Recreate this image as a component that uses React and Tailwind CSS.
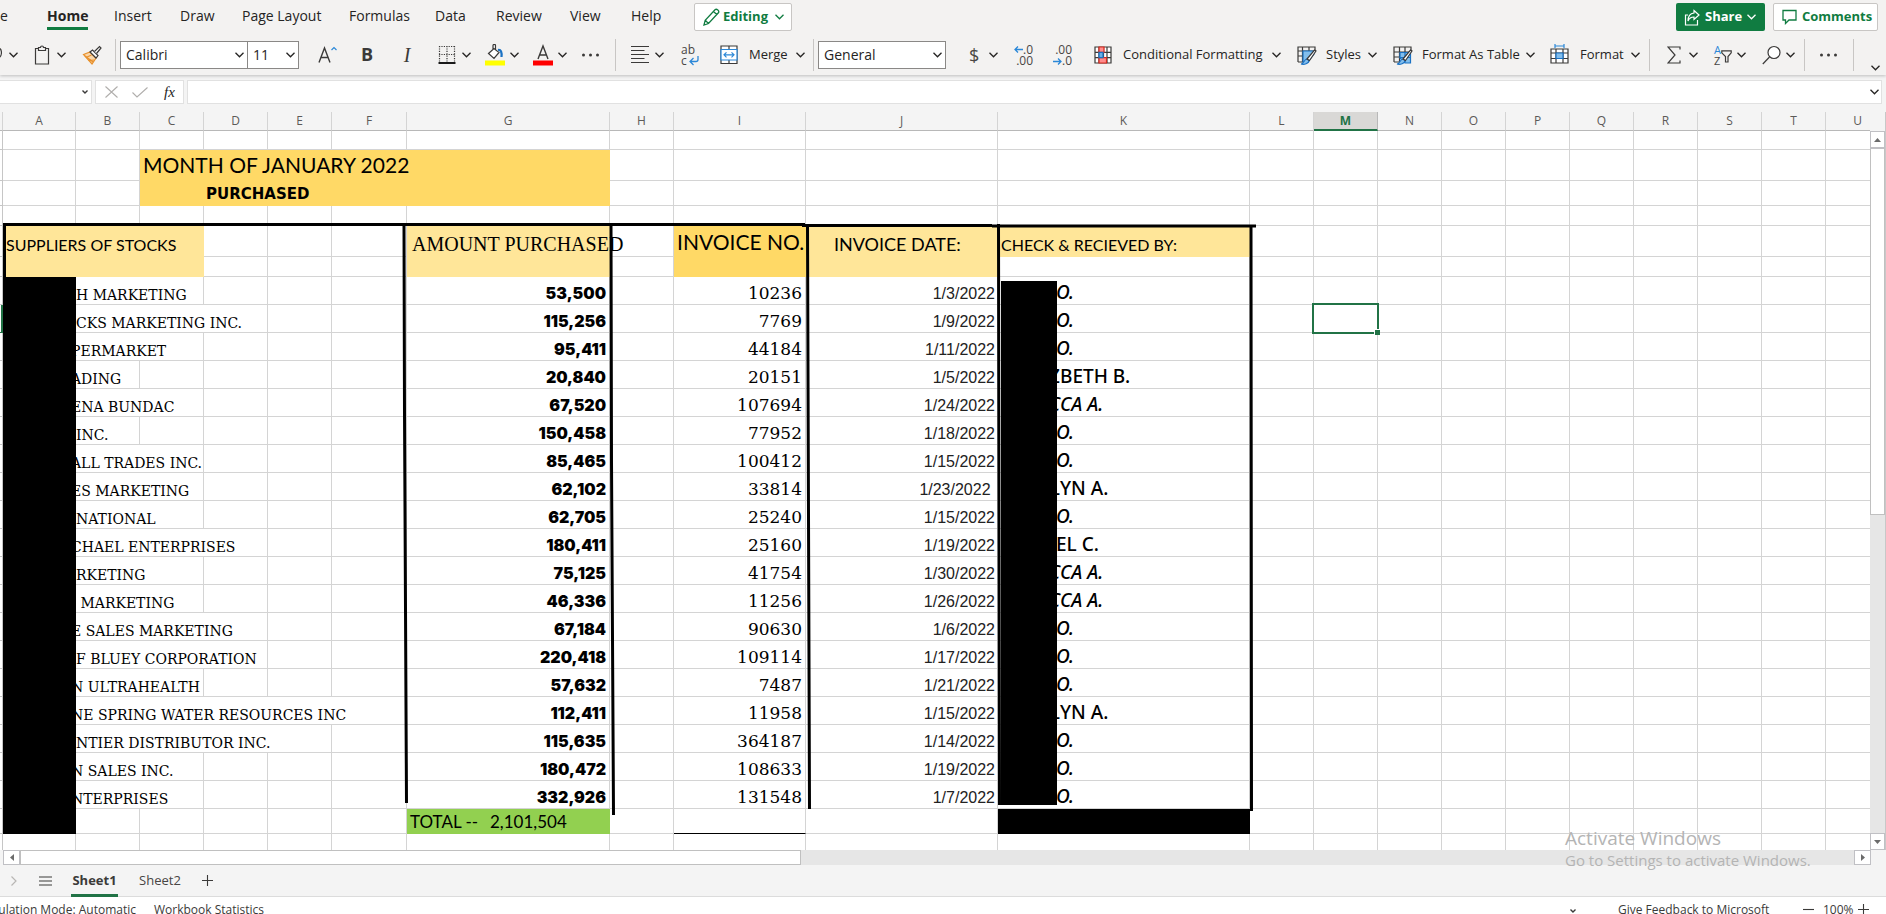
import React from "react";

const UI = "font-['Open_Sans','Noto_Sans',sans-serif]";
const CALIBRI = "font-['Lato','Noto_Sans',sans-serif]";

const menuTabs = [
  { label: "Home", cls: "w-[67px]", active: true },
  { label: "Insert", cls: "w-[66px]" },
  { label: "Draw", cls: "w-[62px]" },
  { label: "Page Layout", cls: "w-[107px]" },
  { label: "Formulas", cls: "w-[86px]" },
  { label: "Data", cls: "w-[61px]" },
  { label: "Review", cls: "w-[74px]" },
  { label: "View", cls: "w-[61px]" },
  { label: "Help", cls: "w-[63px]" },
];

const suppliers = [
  { name: "H MARKETING", span: 2, amount: "53,500", invoice: "10236", date: "1/3/2022", hidden: "", by: "O.", slant: true },
  { name: "CKS MARKETING INC.", span: 3, amount: "115,256", invoice: "7769", date: "1/9/2022", hidden: "", by: "O.", slant: true },
  { name: "PERMARKET", clip: true, span: 2, amount: "95,411", invoice: "44184", date: "1/11/2022", hidden: "", by: "O.", slant: true },
  { name: "ADING", clip: true, span: 1, amount: "20,840", invoice: "20151", date: "1/5/2022", hidden: "Z", by: "BETH B." },
  { name: "ENA BUNDAC", clip: true, span: 2, amount: "67,520", invoice: "107694", date: "1/24/2022", hidden: "C", by: "CA A.", slant: true },
  { name: "INC.", span: 1, amount: "150,458", invoice: "77952", date: "1/18/2022", hidden: "", by: "O.", slant: true },
  { name: "ALL TRADES INC.", clip: true, span: 2, amount: "85,465", invoice: "100412", date: "1/15/2022", hidden: "", by: "O.", slant: true },
  { name: "ES MARKETING", clip: true, span: 2, amount: "62,102", invoice: "33814", date: "1/23/2022 ", hidden: "L", by: "YN A." },
  { name: "NATIONAL", span: 2, amount: "62,705", invoice: "25240", date: "1/15/2022", hidden: "", by: "O.", slant: true },
  { name: "CHAEL ENTERPRISES", clip: true, span: 3, amount: "180,411", invoice: "25160", date: "1/19/2022", hidden: "", by: "EL C." },
  { name: "RKETING", span: 2, amount: "75,125", invoice: "41754", date: "1/30/2022", hidden: "C", by: "CA A.", slant: true },
  { name: " MARKETING", span: 2, amount: "46,336", invoice: "11256", date: "1/26/2022", hidden: "C", by: "CA A.", slant: true },
  { name: "E SALES MARKETING", clip: true, span: 3, amount: "67,184", invoice: "90630", date: "1/6/2022", hidden: "", by: "O.", slant: true },
  { name: "F BLUEY CORPORATION", span: 3, amount: "220,418", invoice: "109114", date: "1/17/2022", hidden: "", by: "O.", slant: true },
  { name: "N ULTRAHEALTH", clip: true, span: 2, amount: "57,632", invoice: "7487", date: "1/21/2022", hidden: "", by: "O.", slant: true },
  { name: "NE SPRING WATER RESOURCES INC", clip: true, span: 5, amount: "112,411", invoice: "11958", date: "1/15/2022", hidden: "L", by: "YN A." },
  { name: "NTIER DISTRIBUTOR INC.", span: 4, amount: "115,635", invoice: "364187", date: "1/14/2022", hidden: "", by: "O.", slant: true },
  { name: "N SALES INC.", clip: true, span: 2, amount: "180,472", invoice: "108633", date: "1/19/2022", hidden: "", by: "O.", slant: true },
  { name: "NTERPRISES", clip: true, span: 2, amount: "332,926", invoice: "131548", date: "1/7/2022", hidden: "", by: "O.", slant: true },
];

const columns = "ABCDEFGHIJKLMNOPQRSTU".split("");
const columnWidths = {
  A: "w-[73px]", F: "w-[75px]", G: "w-[203px]", I: "w-[132px]", J: "w-[192px]", K: "w-[252px]",
};

function Chevron({ className = "" }) {
  return (
    <svg className={"h-[6px] w-[9px] shrink-0 " + className} viewBox="0 0 9 6" fill="none" stroke="currentColor" strokeWidth="1.3" aria-hidden="true">
      <path d="M0.5 0.8 4.5 4.8 8.5 0.8" />
    </svg>
  );
}

function Sep({ className = "" }) {
  return <span className={"h-8 w-px shrink-0 bg-[#c8c6c4] " + className} />;
}

function Tool({ label, className = "", gap = "gap-[6px]", menu = true, children }) {
  return (
    <button type="button" aria-label={label} className={"flex h-8 shrink-0 items-center " + gap + " " + className}>
      {children}
      {menu && <Chevron />}
    </button>
  );
}

function Icon({ w, h = 20, cls, children }) {
  return (
    <svg className={"shrink-0 " + cls} viewBox={`0 0 ${w} ${h}`} fill="none" stroke="#3b3a39" strokeWidth="1.2" aria-hidden="true">
      {children}
    </svg>
  );
}

function Dots() {
  return (
    <Icon w={19} cls="h-5 w-[19px]">
      <g fill="#3b3a39" stroke="none">
        <circle cx="2.5" cy="10" r="1.5" />
        <circle cx="9.5" cy="10" r="1.5" />
        <circle cx="16.5" cy="10" r="1.5" />
      </g>
    </Icon>
  );
}

function TopBar() {
  return (
    <div className="flex h-[34px] items-start">
      <nav className="flex">
        <a href="#file" className="w-[47px] pt-[6px] text-[14px] leading-5">e</a>
        {menuTabs.map((t) => (
          <a key={t.label} href={"#" + t.label} className={"block shrink-0 whitespace-nowrap pt-[6px] text-[14px] leading-5 " + t.cls}>
            <span className={t.active ? "inline-block border-b-[3px] border-[#107c41] pb-px font-bold" : ""}>{t.label}</span>
          </a>
        ))}
      </nav>
      <button type="button" className="mt-[3px] flex h-7 w-[98px] items-center rounded-[2px] border border-[#c8c6c4] bg-white pl-2 text-[13px] font-bold text-[#107c41]">
        <svg className="h-[18px] w-[17px]" viewBox="0 0 17 18" fill="none" stroke="currentColor" strokeWidth="1.3" aria-hidden="true">
          <path d="M1 17 2.200 12.200 12 1.800c1.600-1.500 4.800 1 3.400 3L5.500 15.500Z M10.500 3.500 13.800 6.500 M2.200 12.200 5.500 15.500" />
        </svg>
        <span className="ml-[3px] w-[46px] text-left">Editing</span>
        <Chevron className="ml-[6px]" />
      </button>
      <div className="ml-auto mr-2 mt-[3px] flex gap-2">
        <button type="button" className="flex h-7 w-[89px] items-center rounded-[2px] bg-[#107c41] pl-2 text-[13px] font-bold text-white">
          <svg className="h-[17px] w-4" viewBox="0 0 16 17" fill="none" stroke="currentColor" strokeWidth="1.2" aria-hidden="true">
            <path d="M4 6H1.500V16h12v-5 M10 1.500 15 6l-5 4.500V8C7 8 5 9.500 4 12 4 8 6 4.500 10 4Z" />
          </svg>
          <span className="ml-[5px] w-9 text-left">Share</span>
          <Chevron className="ml-[6px]" />
        </button>
        <button type="button" className="flex h-7 w-[105px] items-center rounded-[2px] border border-[#c8c6c4] bg-white pl-2 text-[13px] font-bold text-[#107c41]">
          <svg className="h-4 w-[15px]" viewBox="0 0 15 16" fill="none" stroke="currentColor" strokeWidth="1.3" aria-hidden="true">
            <path d="M1 1.500h13v9.500H7L3.500 14.500V11H1Z" />
          </svg>
          <span className="ml-[5px]">Comments</span>
        </button>
      </div>
    </div>
  );
}

function Picker({ label, value, className }) {
  return (
    <label className={"relative flex h-7 shrink-0 items-center border border-[#8a8886] bg-white " + className}>
      <span className="sr-only">{label}</span>
      <select className="h-full w-full appearance-none bg-transparent pl-[5px] text-[14px] leading-5 outline-none" defaultValue={value}>
        <option>{value}</option>
      </select>
      <Chevron className="pointer-events-none absolute right-[3px]" />
    </label>
  );
}

function Ribbon() {
  return (
    <div className="flex h-[41px] items-center text-[13px]">
      <Tool label="Undo" gap="gap-[7px]">
        <Icon w={2} cls="h-5 w-[2px]"><path d="M0 3.500c2 2 2 7-0.500 9" /></Icon>
      </Tool>
      <Tool label="Paste" className="ml-4" gap="gap-[7px]">
        <Icon w={16} cls="h-5 w-4">
          <path d="M4.500 3.500H1.500v15.500h13V3.500h-3" />
          <path d="M4.500 5.500v-3h2a1.500 1.500 0 0 1 3 0h2v3Z" />
        </Icon>
      </Tool>
      <Tool label="Format Painter" className="ml-4" menu={false}>
        <Icon w={20} cls="h-5 w-5">
          <path d="M1.500 9.500 8 7l6 6-4 6Z" fill="#fbd7a8" stroke="#e8912d" />
          <path d="M4 12.500 9.500 10 M6.500 15.500 12 15 M3 11l8 6" stroke="#e8912d" />
          <path d="M8 7l2.500-2 5.500 5.500-2 2.500Z" fill="#fff" />
          <path d="M12.500 6.500 17.500 1.500l1.500 1.500-4.500 5.500" fill="#fff" />
        </Icon>
      </Tool>
      <Sep className="ml-[13px]" />
      <Picker label="Font" value="Calibri" className="ml-1 w-32" />
      <Picker label="Font size" value="11" className="-ml-px w-[52px]" />
      <Tool label="Increase font size" className="ml-[19px]" menu={false}>
        <Icon w={19} cls="h-5 w-[19px]">
          <path d="M1 17.500 6.500 3l5.500 14.500 M3 12.500h7" strokeWidth="1.400" />
          <path d="M13.500 5 16 2.500 18.500 5" stroke="#2b88d8" />
        </Icon>
      </Tool>
      <button type="button" className="ml-6 h-8 w-3 shrink-0 text-center text-[18px] font-bold text-[#3b3a39]">B</button>
      <button type="button" className="ml-7 h-8 w-3 shrink-0 text-center font-['Liberation_Serif',serif] text-[20px] italic text-[#3b3a39]">I</button>
      <Tool label="Borders" className="ml-[25px]">
        <Icon w={18} cls="h-5 w-[18px]">
          <path d="M1.500 1v16 M9 1v16 M16.500 1v16 M1 1.500h16 M1 9.500h16" strokeDasharray="1.200 1.200" />
          <path d="M0.500 18h17" stroke="#000" strokeWidth="1.800" />
        </Icon>
      </Tool>
      <Tool label="Fill color" className="ml-[14px]" gap="gap-[5px]">
        <Icon w={20} cls="h-[22px] w-5" h={22}>
          <path d="M3.500 9.500 9 4.500l5 4-5 6Z M8 6V1.500c0-1.500 2.500-1.500 2.500 0V6" fill="#fff" />
          <path d="M13 6c3-0.500 4 2 3.500 7" stroke="#1b72c4" strokeWidth="2.200" />
          <path d="M0 16.500h20v5H0Z" fill="#ffff00" stroke="none" />
        </Icon>
      </Tool>
      <Tool label="Font color" className="ml-[14px]" gap="gap-[5px]">
        <Icon w={20} cls="h-[22px] w-5" h={22}>
          <path d="M5 15 10 2l5 13 M6.800 11h6.400" strokeWidth="1.400" />
          <path d="M0 16.500h20v5H0Z" fill="#ff0000" stroke="none" />
        </Icon>
      </Tool>
      <Tool label="More font options" className="ml-[14px]" menu={false}><Dots /></Tool>
      <Sep className="ml-[15px]" />
      <Tool label="Alignment" className="ml-[15px]">
        <Icon w={18} cls="h-5 w-[18px]">
          <path d="M0 1.500h18 M0 5.500h13.500 M0 9.500h18 M0 13.500h13.500 M0 17.500h18" />
        </Icon>
      </Tool>
      <Tool label="Wrap text" className="ml-[17px]" menu={false}>
        <span className="relative block h-[22px] w-[18px] text-left text-[12px] leading-[11px] text-[#484644]">
          ab<br />c
          <svg className="absolute bottom-0 right-0 h-[10px] w-[10px]" viewBox="0 0 10 10" fill="none" stroke="#2b88d8" strokeWidth="1.3" aria-hidden="true">
            <path d="M9 0v3.500c0 1-0.500 2-2 2H1.500 M4.500 2 1 5.500 4.500 9" />
          </svg>
        </span>
      </Tool>
      <Tool label="Merge" className="ml-[21px]" gap="gap-[7px]">
        <Icon w={18} cls="mr-1 h-5 w-[18px]">
          <path d="M1 1h16v17.500H1Z M9 1v3.500 M9 15v3.500" fill="#fff" />
          <path d="M1 4.500h16v10.500H1Z" stroke="#2b88d8" fill="#fff" />
          <path d="M4 9.800h10 M6.500 7.300 4 9.800l2.500 2.500 M11.500 7.300 14 9.800l-2.500 2.500" stroke="#2b88d8" />
        </Icon>
        <span className="w-10 text-left">Merge</span>
      </Tool>
      <Sep className="ml-2" />
      <Picker label="Number format" value="General" className="ml-1 w-32" />
      <Tool label="Currency" className="ml-[23px]" gap="gap-[10px]">
        <span className="w-[10px] text-[18px] leading-5 text-[#484644]">$</span>
      </Tool>
      <Tool label="Increase decimal" className="ml-4" menu={false}>
        <span className="relative block w-[19px] text-right text-[12px] leading-[11px] text-[#484644]">
          .0<br />.00
          <svg className="absolute left-0 top-[2px] h-[7px] w-[9px]" viewBox="0 0 9 7" fill="none" stroke="#2b88d8" strokeWidth="1.3" aria-hidden="true">
            <path d="M9 3.500H1 M4 0.500 1 3.500l3 3" />
          </svg>
        </span>
      </Tool>
      <Tool label="Decrease decimal" className="ml-5" menu={false}>
        <span className="relative block w-[19px] text-right text-[12px] leading-[11px] text-[#484644]">
          .00<br />.0
          <svg className="absolute bottom-[1px] left-0 h-[7px] w-[9px]" viewBox="0 0 9 7" fill="none" stroke="#2b88d8" strokeWidth="1.3" aria-hidden="true">
            <path d="M0 3.500h8 M5 0.500 8 3.500l-3 3" />
          </svg>
        </span>
      </Tool>
      <Tool label="Conditional Formatting" className="ml-[22px]" gap="gap-[7px]">
        <Icon w={18} cls="mr-1 h-5 w-[18px]">
          <path d="M1 2h16v16H1Z M1 7.300h16 M1 12.600h16 M5 2v16 M9.500 2v16 M13 2v16" fill="#fff" />
          <path d="M5 2h5v5.300H5Z M5 12.600h7.500V18H5Z" fill="#ff8c8c" stroke="#d92b1f" />
          <path d="M5 7.300h4v5.300H5Z" fill="#69afe5" stroke="#1b72c4" />
        </Icon>
        <span className="w-[142px] whitespace-nowrap text-left">Conditional Formatting</span>
      </Tool>
      <Tool label="Styles" className="ml-4">
        <Icon w={20} cls="mr-[3px] h-5 w-5">
          <path d="M1 17V2h17v4 M1 6h17 M5.500 2v15 M1 11h5 M1 17h6 M12 2v4" />
          <path d="M6 6h11v3l-6 8H6Z" fill="#83beec" stroke="#1b72c4" />
          <path d="M4 19c3 0 3-5 6-5l2 1.500c0 3-5 4.500-8 3.500Z" fill="#83beec" stroke="#1b72c4" />
          <path d="M10 14 17.500 5l1.500 1-6.500 9.500Z" fill="#fff" />
        </Icon>
        <span className="w-9 text-left">Styles</span>
      </Tool>
      <Tool label="Format As Table" className="ml-4">
        <Icon w={20} cls="mr-[3px] h-5 w-5">
          <path d="M1 17V2h17v4 M1 7h17 M1 12h8 M1 17h6 M6.500 2v15 M12 2v8" />
          <path d="M7 7.500h10.500v10.500H12L7 13Z" fill="#83beec" stroke="#1b72c4" />
          <path d="M6.500 12.500h11 M12 7.500v10" stroke="#1b72c4" />
          <path d="M4 19c3 0 3-5 6-5l2 1.500c0 3-5 4.500-8 3.500Z" fill="#83beec" stroke="#1b72c4" />
          <path d="M10 14 17.500 5l1.500 1-6.500 9.500Z" fill="#fff" />
        </Icon>
        <span className="w-[98px] whitespace-nowrap text-left">Format As Table</span>
      </Tool>
      <Tool label="Format" className="ml-[15px]">
        <Icon w={19} cls="mr-[5px] h-[22px] w-[19px]">
          <path d="M1 4h17v14H1Z M1 8h17 M1 13.500h17 M6 4v14 M13 4v14" fill="#fff" />
          <path d="M6 8h7v5.500H6Z" fill="#83beec" stroke="#1b72c4" />
          <path d="M5 1h9 M5-1v4 M14-1v4" stroke="#2b88d8" />
        </Icon>
        <span className="w-[45px] text-left">Format</span>
      </Tool>
      <Sep className="ml-[9px]" />
      <Tool label="AutoSum" className="ml-[17px]" gap="gap-2">
        <Icon w={14} cls="h-5 w-[14px]"><path d="M13 4.500V2H1l7 8-7 8h12v-2.500" /></Icon>
      </Tool>
      <Tool label="Sort and filter" className="ml-4" gap="gap-[5px]">
        <span className="relative block h-[22px] w-[18px] text-left text-[11px] leading-[11px] text-[#484644]">
          <span className="text-[#2b88d8]">A</span><br />Z
          <svg className="absolute right-0 top-[6px] h-[13px] w-[11px]" viewBox="0 0 11 13" fill="none" stroke="#3b3a39" strokeWidth="1.2" aria-hidden="true">
            <path d="M0.800 0.800h9.400v2L7 6.500v5.500H4.500V6.500L0.800 2.800Z" />
          </svg>
        </span>
      </Tool>
      <Tool label="Find" className="ml-4" gap="gap-[5px]">
        <Icon w={19} cls="h-5 w-[19px]">
          <circle cx="12" cy="7.500" r="6" fill="#fff" />
          <path d="M7.500 12 0.800 19" />
        </Icon>
      </Tool>
      <Sep className="ml-[9px]" />
      <Tool label="More commands" className="ml-[14px]" menu={false}><Dots /></Tool>
      <Sep className="ml-[15px]" />
      <button type="button" aria-label="Ribbon display options" className="ml-auto mr-[6px] flex h-8 shrink-0 items-end">
        <Chevron />
      </button>
    </div>
  );
}

function FormulaBar() {
  return (
    <div className="flex h-9 items-start gap-[3px] bg-[#f4f4f4] pr-1 pt-1">
      <label className="relative flex h-6 w-[92px] items-center border border-l-0 border-[#e1e1e1] bg-white">
        <span className="sr-only">Name box</span>
        <input className="h-full w-full bg-transparent outline-none" />
        <svg className="absolute right-[3px] h-1 w-[6px]" viewBox="0 0 6 4" fill="none" stroke="#3b3a39" strokeWidth="1.4" aria-hidden="true"><path d="M0.500 0.500 3 3 5.500 0.500" /></svg>
      </label>
      <div className="flex h-6 w-[89px] items-center border border-[#e1e1e1] bg-white pl-[9px]">
        <button type="button" aria-label="Cancel"><svg className="h-3 w-[13px]" viewBox="0 0 13 12" stroke="#b0aeac" strokeWidth="1.1" aria-hidden="true"><path d="M0.500 0.500 12.500 11.500 M12.500 0.500 0.500 11.500" /></svg></button>
        <button type="button" aria-label="Enter" className="ml-[14px]"><svg className="h-[11px] w-4" viewBox="0 0 16 11" fill="none" stroke="#b0aeac" strokeWidth="1.1" aria-hidden="true"><path d="M0.500 5.500 5 10 15.500 0.500" /></svg></button>
        <button type="button" aria-label="Insert function" className="ml-4 font-['Liberation_Serif',serif] text-[15px] italic leading-5 text-[#252423]">fx</button>
      </div>
      <label className="relative flex h-6 flex-1 items-center border border-[#e1e1e1] bg-white">
        <span className="sr-only">Formula bar</span>
        <input className="h-full w-full bg-transparent px-2 outline-none" />
        <Chevron className="absolute right-[2px]" />
      </label>
    </div>
  );
}

const cell = "border-r border-b border-[#d4d4d4] p-0";
const filled = "border-r border-b border-transparent p-0";

function Blank({ from, to }) {
  return columns
    .slice(columns.indexOf(from), columns.indexOf(to) + 1)
    .map((c) => <td key={c} className={cell} />);
}

function RowHead({ selected }) {
  return <td className={selected ? "border-r-2 border-b border-[#217346] p-0" : "border-r border-b border-[#c6c6c6] p-0"} />;
}

function Grid() {
  return (
    <div className="relative min-w-0 flex-1 overflow-hidden bg-white">
      <table className="w-px table-fixed border-separate border-spacing-0 text-black">
        <colgroup>
          <col className="w-[3px]" />
          {columns.map((c) => (
            <col key={c} className={c in columnWidths ? columnWidths[c] : "w-16"} />
          ))}
        </colgroup>
        <thead>
          <tr className="h-[19px]">
            <th className="border-r border-b border-[#d4d4d4] border-b-[#b8b8b8] bg-[#f4f4f4] p-0" />
            {columns.map((c) => (
              <th
                key={c}
                className={
                  c === "M"
                    ? "border-r border-b-2 border-r-[#b8b8b8] border-b-[#217346] bg-[#d9d8d6] p-0 text-[12px] font-bold leading-4 text-[#217346]"
                    : "border-r border-b border-r-[#d4d4d4] border-b-[#b8b8b8] bg-[#f4f4f4] p-0 pb-px text-[12px] font-normal leading-4 text-[#5c5a58]"
                }
              >
                {c}
              </th>
            ))}
          </tr>
        </thead>
        <tbody>
          <tr className="h-[19px]"><RowHead /><Blank from="A" to="U" /></tr>
          <tr className="h-[31px]">
            <RowHead /><Blank from="A" to="B" />
            <td colSpan={5} className={"bg-[#ffd966] text-[21px] leading-7 " + filled + " " + CALIBRI}>
              <span className="pl-[3px]">MONTH OF JANUARY 2022</span>
            </td>
            <Blank from="H" to="U" />
          </tr>
          <tr className="h-[25px]">
            <RowHead /><Blank from="A" to="B" />
            <td colSpan={5} className={"bg-[#ffd966] font-['DejaVu_Sans',sans-serif] text-[15px] font-bold " + filled}>
              <div className="h-6 pl-[66px] pt-[2px] leading-[22px]">PURCHASED</div>
            </td>
            <Blank from="H" to="U" />
          </tr>
          <tr className="h-5"><RowHead /><Blank from="A" to="U" /></tr>
          <tr className={"h-[31px] whitespace-nowrap text-[16px] leading-7 " + CALIBRI}>
            <RowHead />
            <td colSpan={3} rowSpan={2} className={"bg-[#ffe699] align-top " + filled}><div className="pl-[3px] pt-[5px]">SUPPLIERS OF STOCKS</div></td>
            <Blank from="D" to="F" />
            <td rowSpan={2} className={"bg-[#ffe699] align-top font-['Liberation_Serif',serif] text-[20px] " + filled}><div className="relative z-10 pl-[5px] pt-1">AMOUNT PURCHASED</div></td>
            <Blank from="H" to="H" />
            <td rowSpan={2} className={"bg-[#ffd966] align-top text-[21px] " + filled}><div className="pl-[3px] pt-[2px]">INVOICE NO.</div></td>
            <td rowSpan={2} className={"bg-[#ffe699] align-top text-[18px] " + filled}><div className="pl-7 pt-1">INVOICE DATE:</div></td>
            <td className={"bg-[#ffe699] align-top " + filled}><div className="h-[30px] pl-[3px] pt-[5px]">CHECK &amp; RECIEVED BY:</div></td>
            <Blank from="L" to="U" />
          </tr>
          <tr className="h-5">
            <RowHead /><Blank from="D" to="F" /><Blank from="H" to="H" /><Blank from="K" to="U" />
          </tr>
          {suppliers.map((s, i) => (
            <tr key={s.name + i} className="h-7 whitespace-pre">
              <RowHead selected={i === 1} />
              <td className="bg-black p-0" />
              <td colSpan={s.span} className={cell}>
                <div className={"h-[27px] overflow-hidden pt-[9px] font-['DejaVu_Serif',serif] text-[14px] leading-[18px] " + (s.clip ? "-indent-[5px]" : "")}>{s.name}</div>
              </td>
              {s.span < 5 && <Blank from={"BCDEF"[s.span]} to="F" />}
              <td className={cell + " text-right font-['Inter',sans-serif] text-[16px] font-black"}><div className="pr-[3px] pt-[5px] leading-5">{s.amount}</div></td>
              <Blank from="H" to="H" />
              <td className={cell + " text-right font-['DejaVu_Serif',serif] text-[17px]"}><div className="pr-[3px] pt-[5px] leading-5">{s.invoice}</div></td>
              <td className={cell + " text-right font-['Liberation_Sans',sans-serif] text-[16px] text-[#222222]"}><div className="pr-[2px] pt-[7px] leading-5">{s.date}</div></td>
              <td className={cell}>
                <div className={"flex h-[27px] pt-1 font-['Noto_Sans',sans-serif] text-[19px] font-medium leading-[23px] " + (s.slant ? "italic" : "")}>
                  <span className={"flex justify-end " + (s.hidden ? "w-[62px]" : "w-[58px]")}>{s.hidden}</span>
                  <span>{s.by}</span>
                </div>
              </td>
              <Blank from="L" to="L" />
              {i === 1 ? (
                <td className={cell + " relative"}>
                  <div className="absolute -left-[2px] -top-[2px] bottom-[-2px] right-[-2px] border-2 border-[#217346]" />
                  <div className="absolute -bottom-[3px] -right-[3px] h-[6px] w-[6px] border-l border-t border-white bg-[#217346]" />
                </td>
              ) : (
                <Blank from="M" to="M" />
              )}
              <Blank from="N" to="U" />
            </tr>
          ))}
          <tr className="h-[25px]">
            <RowHead />
            <td className="bg-black p-0" />
            <Blank from="B" to="F" />
            <td className={"bg-[#92d050] text-[17px] " + filled + " " + CALIBRI}>
              <div className="flex h-6 pl-[3px] pt-[2px] leading-[22px]"><span className="w-[80px]">TOTAL --</span><span>2,101,504</span></div>
            </td>
            <Blank from="H" to="H" />
            <td className="border-b border-r border-b-black border-r-[#d4d4d4] p-0" />
            <Blank from="J" to="J" />
            <td className="bg-black p-0" />
            <Blank from="L" to="U" />
          </tr>
          <tr className="h-[25px]"><RowHead /><Blank from="A" to="U" /></tr>
          <tr className="h-[25px]"><RowHead /><Blank from="A" to="U" /></tr>
        </tbody>
      </table>
      <svg className="pointer-events-none absolute left-0 top-0 h-[740px] w-[1260px]" viewBox="0 0 1260 740" fill="none" stroke="#000" strokeWidth="3" aria-hidden="true">
        <path d="M1001 169h56v524h-56Z" fill="#000" stroke="none" />
        <path d="M3 112.500H805 M802 113.500H992 M992 114H1256" />
        <path d="M4.500 113v52 M404 113 404.500 300 406.500 691 M611 113 611.500 350 613.500 703 M807.500 113 809.500 697 M998.500 112 999.500 693 M1251 114 1251.500 699" />
      </svg>
    </div>
  );
}

function VerticalScroll() {
  return (
    <div className="flex w-[15px] shrink-0 flex-col bg-[#e6e6e6] pt-[19px] shadow-[inset_0_19px_0_#f4f4f4]">
      <button type="button" aria-label="Scroll up" className="flex h-[18px] items-center justify-center border border-b-2 border-[#c0c0c4] bg-white">
        <svg className="h-1 w-[7px]" viewBox="0 0 7 4" fill="#6b6b6b" aria-hidden="true"><path d="M0 4 3.500 0 7 4Z" /></svg>
      </button>
      <div className="h-[366px] border border-t-0 border-[#c0c0c0] bg-white" />
      <button type="button" aria-label="Scroll down" className="mt-auto flex h-[17px] items-center justify-center border border-[#c0c0c4] bg-white">
        <svg className="h-1 w-[7px]" viewBox="0 0 7 4" fill="#6b6b6b" aria-hidden="true"><path d="M0 0 3.500 4 7 0Z" /></svg>
      </button>
    </div>
  );
}

function HorizontalScroll() {
  return (
    <div className="flex h-[15px] shrink-0 pl-[3px] pr-[15px]">
      <div className="flex flex-1 bg-[#e6e6e6]">
        <button type="button" aria-label="Scroll left" className="flex w-[17px] items-center justify-center border border-[#c0c0c4] bg-white">
          <svg className="h-[7px] w-1" viewBox="0 0 4 7" fill="#6b6b6b" aria-hidden="true"><path d="M4 0 0 3.500 4 7Z" /></svg>
        </button>
        <div className="w-[781px] border border-[#c0c0c0] bg-white" />
        <button type="button" aria-label="Scroll right" className="ml-auto flex w-[17px] items-center justify-center border border-[#c0c0c4] bg-white">
          <svg className="h-[7px] w-1" viewBox="0 0 4 7" fill="#6b6b6b" aria-hidden="true"><path d="M0 0 4 3.500 0 7Z" /></svg>
        </button>
      </div>
    </div>
  );
}

export default function App() {
  return (
    <div className={"relative flex h-screen flex-col overflow-hidden bg-[#f4f4f4] text-[#252423] " + UI}>
      <header className="relative z-10 shrink-0 bg-[#f3f2f1] shadow-[0_1px_3px_rgba(0,0,0,0.22)]">
        <TopBar />
        <Ribbon />
      </header>
      <div className="shrink-0 pt-px"><FormulaBar /></div>
      <main className="flex min-h-0 flex-1 border-r border-[#c8c8c8]">
        <Grid />
        <VerticalScroll />
      </main>
      <HorizontalScroll />
      <div className="flex h-8 shrink-0 items-start border-b border-[#dcdcdc] text-[14px]">
        <button type="button" aria-label="Next sheet" className="ml-[11px] mt-[11px]">
          <svg className="h-[10px] w-[6px]" viewBox="0 0 6 10" fill="none" stroke="#b8b6b4" strokeWidth="1.2" aria-hidden="true"><path d="M0.500 0.500 5 5 0.500 9.500" /></svg>
        </button>
        <button type="button" aria-label="All sheets" className="ml-[22px] mt-[11px]">
          <svg className="h-[10px] w-[13px]" viewBox="0 0 13 10" stroke="#3b3a39" strokeWidth="1.1" aria-hidden="true"><path d="M0 1h13 M0 5h13 M0 9h13" /></svg>
        </button>
        <button type="button" className="ml-[19px] h-8 w-[47px] border-b-[3px] border-[#217346] pt-[2px] text-center text-[13px] font-bold leading-[27px] text-[#3b3a39]">Sheet1</button>
        <button type="button" className="ml-5 h-8 w-[44px] pb-[3px] pt-[2px] text-center text-[13px] leading-[27px] text-[#484644]">Sheet2</button>
        <button type="button" aria-label="New sheet" className="ml-5 mt-[10px]">
          <svg className="h-[11px] w-[11px]" viewBox="0 0 11 11" stroke="#3b3a39" strokeWidth="1.1" aria-hidden="true"><path d="M0 5.500h11 M5.500 0v11" /></svg>
        </button>
      </div>
      <footer className="flex h-[17px] shrink-0 items-start overflow-hidden bg-white pt-1 text-[12px] leading-[18px] text-[#3b3a39]">
        <span className="flex w-[136px] justify-end whitespace-nowrap">culation Mode: Automatic</span>
        <a href="#stats" className="ml-[18px]">Workbook Statistics</a>
        <svg className="ml-auto mt-2 h-1 w-[6px]" viewBox="0 0 6 4" fill="none" stroke="#3b3a39" strokeWidth="1.4" aria-hidden="true"><path d="M0.500 0.500 3 3 5.500 0.500" /></svg>
        <a href="#feedback" className="ml-[42px] w-[145px] whitespace-nowrap">Give Feedback to Microsoft</a>
        <button type="button" aria-label="Zoom out" className="ml-10 mt-[3px]"><svg className="h-[11px] w-[11px]" viewBox="0 0 11 11" stroke="#3b3a39" strokeWidth="1.1" aria-hidden="true"><path d="M0 5.500h11" /></svg></button>
        <span className="ml-[9px] w-7">100%</span>
        <button type="button" aria-label="Zoom in" className="ml-[7px] mr-[17px] mt-[3px]"><svg className="h-[11px] w-[11px]" viewBox="0 0 11 11" stroke="#3b3a39" strokeWidth="1.1" aria-hidden="true"><path d="M0 5.500h11 M5.500 0v11" /></svg></button>
      </footer>
      <div className="pointer-events-none absolute bottom-11 right-[60px] z-20 w-[261px] whitespace-nowrap text-[#b4b4b4]">
        <div className="text-[19px] leading-6">Activate Windows</div>
        <div className="text-[15px] leading-5">Go to Settings to activate Windows.</div>
      </div>
    </div>
  );
}
